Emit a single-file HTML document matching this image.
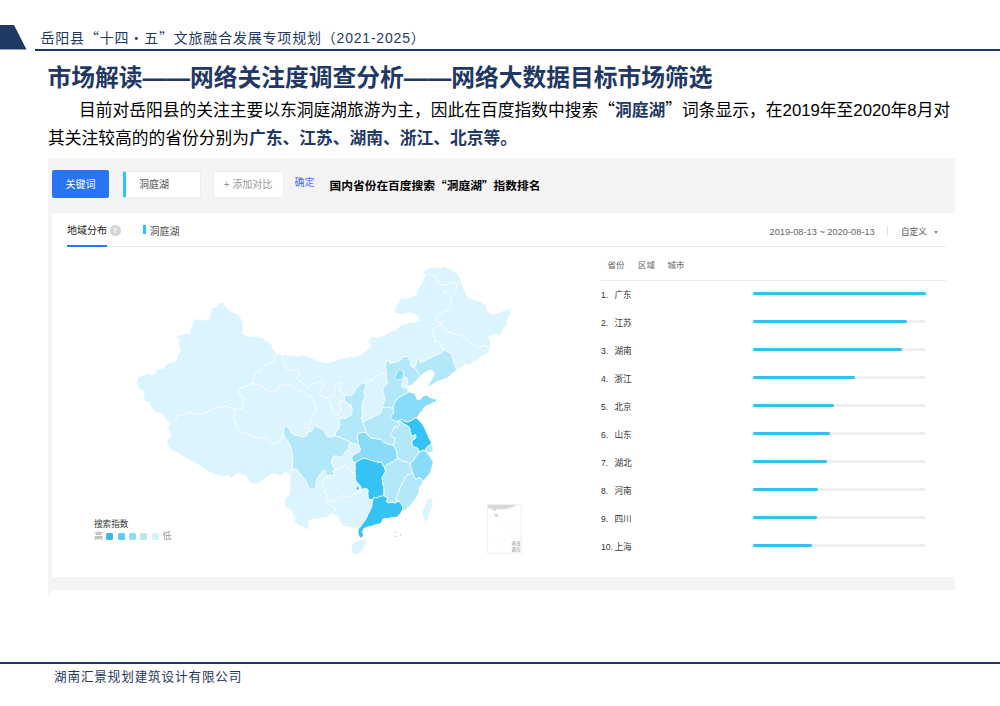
<!DOCTYPE html>
<html lang="zh-CN">
<head>
<meta charset="utf-8">
<title>市场解读——网络关注度调查分析</title>
<style>
*{margin:0;padding:0;box-sizing:border-box;}
html,body{width:1000px;height:706px;background:#fff;overflow:hidden;}
body{position:relative;font-family:"Liberation Sans","Noto Sans CJK SC",sans-serif;color:#000;}
.abs{position:absolute;white-space:nowrap;}
.cj{font-family:"Noto Sans CJK SC",sans-serif;}
/* slide chrome */
#corner{left:0;top:25px;width:27px;height:25px;}
#hdr{left:40.5px;top:26px;height:22px;line-height:22px;font-size:14px;letter-spacing:0.8px;color:#1f3864;}
#hline{left:35px;top:49px;width:965px;height:2px;background:#1f3864;}
#title{left:47.5px;top:61px;height:34px;line-height:34px;font-size:23.75px;font-weight:700;color:#1f3864;}
.body{font-size:16.75px;line-height:30px;height:30px;color:#000;}
.body b{color:#1f3864;font-weight:700;}
#l1{left:79px;top:93.5px;}
#l2{left:48px;top:124px;}
#fline{left:0;top:662px;width:1000px;height:2px;background:#1f3864;}
#foot{left:54px;top:668px;font-size:12.6px;line-height:18px;letter-spacing:0.85px;color:#1f3864;}
/* baidu index panel */
#panel{left:48px;top:157.5px;width:907px;height:432px;background:#f4f4f4;}
#pstub{left:48px;top:589px;width:3px;height:6px;background:#f4f4f4;}
#card{left:52px;top:213px;width:903px;height:363.5px;background:#fff;}
#kw{left:52px;top:170px;width:57px;height:28px;border-radius:2px;background:#2775f4;color:#fff;font-size:10px;line-height:29.6px;text-align:center;}
#inp{left:123px;top:170.5px;width:77.5px;height:27px;background:#fff;border:1px solid #ececec;border-left:3px solid #2ec3f2;border-radius:2px;font-size:10px;line-height:26.2px;padding-left:13px;color:#555;}
#add{left:212.5px;top:170.5px;width:71px;height:27px;background:#fff;border:1px solid #ececec;border-radius:2px;font-size:10px;line-height:26.2px;text-align:center;color:#999;}
#ok{left:294.5px;top:174px;font-size:10px;line-height:18px;color:#4e6ef2;}
#cap{left:329.5px;top:175px;font-size:11.72px;line-height:20px;font-weight:700;color:#000;}
#tab{left:67px;top:222px;font-size:10px;line-height:18px;color:#222;}
#q{left:109.5px;top:225px;width:11px;height:11px;border-radius:50%;background:#d4d4d4;color:#fff;font-size:8px;line-height:11px;text-align:center;font-weight:700;}
#tabu{left:67px;top:244.5px;width:39.5px;height:2px;background:#2775f4;}
#sep1{left:106.5px;top:246px;width:839.5px;height:1px;background:#ebebeb;}
#lgbar{left:143px;top:225px;width:3px;height:9px;background:#2ec3f2;}
#lgtxt{left:149.5px;top:222.6px;font-size:10px;line-height:18px;color:#555;}
#date{left:769.5px;top:223px;font-size:9.25px;line-height:18px;color:#666;}
#dv{left:886.5px;top:226px;width:1px;height:10px;background:#e2e2e2;}
#cust{left:901px;top:223px;font-size:8.6px;line-height:18px;color:#555;}
#caret{left:934px;top:231px;width:0;height:0;border-left:2.5px solid transparent;border-right:2.5px solid transparent;border-top:3px solid #888;}
.th{top:256.2px;font-size:8.5px;line-height:18px;color:#666;}
#sep2{left:601px;top:279.5px;width:345px;height:1px;background:#ebebeb;}
.rk{left:601px;font-size:8.6px;line-height:16px;color:#333;}
.rk span{position:absolute;left:13.5px;top:0;}
.bg{left:753px;width:173px;height:3px;background:#efefef;border-radius:1.5px;}
.fg{left:753px;height:3px;background:#2ec3f2;border-radius:1.5px;}
#lgt{left:94px;top:517px;font-size:8.6px;line-height:14px;color:#333;}
.lgs{top:533px;width:7px;height:7px;border-radius:1.5px;}
.lgl{top:528px;font-size:9px;line-height:16px;color:#999;}
#map{left:120px;top:250px;width:440px;height:320px;}
</style>
</head>
<body>
<svg id="corner" class="abs" viewBox="0 0 27 25"><polygon points="0,0 14,0 26.5,24.5 0,24.5" fill="#1f3864"/></svg>
<div id="hdr" class="abs">岳阳县<span class="cj">“</span>十四<span class="cj">·</span>五<span class="cj">”</span>文旅融合发展专项规划（2021-2025）</div>
<div id="hline" class="abs"></div>
<div id="title" class="abs">市场解读——网络关注度调查分析——网络大数据目标市场筛选</div>
<div id="l1" class="abs body">目前对岳阳县的关注主要以东洞庭湖旅游为主，因此在百度指数中搜索<span class="cj">“</span><b>洞庭湖</b><span class="cj">”</span>词条显示，在2019年至2020年8月对</div>
<div id="l2" class="abs body">其关注较高的的省份分别为<b>广东、江苏、湖南、浙江、北京等。</b></div>

<div id="panel" class="abs"></div>
<div id="pstub" class="abs"></div>
<div id="card" class="abs"></div>
<div id="kw" class="abs">关键词</div>
<div id="inp" class="abs">洞庭湖</div>
<div id="add" class="abs">+ 添加对比</div>
<div id="ok" class="abs">确定</div>
<div id="cap" class="abs">国内省份在百度搜索<span class="cj">“</span>洞庭湖<span class="cj">”</span>指数排名</div>
<div id="tab" class="abs">地域分布</div>
<div id="q" class="abs">?</div>
<div id="tabu" class="abs"></div>
<div id="sep1" class="abs"></div>
<div id="lgbar" class="abs"></div>
<div id="lgtxt" class="abs">洞庭湖</div>
<div id="date" class="abs">2019-08-13 ~ 2020-08-13</div>
<div id="dv" class="abs"></div>
<div id="cust" class="abs">自定义</div>
<div id="caret" class="abs"></div>
<div class="abs th" style="left:607.5px">省份</div>
<div class="abs th" style="left:638px">区域</div>
<div class="abs th" style="left:667.5px">城市</div>
<div id="sep2" class="abs"></div>
<div class="abs rk" style="top:286.5px">1.<span>广东</span></div>
<div class="abs bg" style="top:292.0px"></div><div class="abs fg" style="top:292.0px;width:173.0px"></div>
<div class="abs rk" style="top:314.5px">2.<span>江苏</span></div>
<div class="abs bg" style="top:320.0px"></div><div class="abs fg" style="top:320.0px;width:154.2px"></div>
<div class="abs rk" style="top:342.5px">3.<span>湖南</span></div>
<div class="abs bg" style="top:348.0px"></div><div class="abs fg" style="top:348.0px;width:149.0px"></div>
<div class="abs rk" style="top:370.5px">4.<span>浙江</span></div>
<div class="abs bg" style="top:376.0px"></div><div class="abs fg" style="top:376.0px;width:102.0px"></div>
<div class="abs rk" style="top:398.5px">5.<span>北京</span></div>
<div class="abs bg" style="top:404.0px"></div><div class="abs fg" style="top:404.0px;width:80.5px"></div>
<div class="abs rk" style="top:426.5px">6.<span>山东</span></div>
<div class="abs bg" style="top:432.0px"></div><div class="abs fg" style="top:432.0px;width:77.0px"></div>
<div class="abs rk" style="top:454.5px">7.<span>湖北</span></div>
<div class="abs bg" style="top:460.0px"></div><div class="abs fg" style="top:460.0px;width:74.4px"></div>
<div class="abs rk" style="top:482.5px">8.<span>河南</span></div>
<div class="abs bg" style="top:488.0px"></div><div class="abs fg" style="top:488.0px;width:64.5px"></div>
<div class="abs rk" style="top:510.5px">9.<span>四川</span></div>
<div class="abs bg" style="top:516.0px"></div><div class="abs fg" style="top:516.0px;width:63.7px"></div>
<div class="abs rk" style="top:538.5px">10.<span>上海</span></div>
<div class="abs bg" style="top:544.0px"></div><div class="abs fg" style="top:544.0px;width:58.8px"></div>
<div id="lgt" class="abs">搜索指数</div>
<div class="abs lgl" style="left:94px">高</div>
<div class="abs lgs" style="left:106px;background:#2fbdf0"></div>
<div class="abs lgs" style="left:117.5px;background:#5ccdf5"></div>
<div class="abs lgs" style="left:129px;background:#8fdcf9"></div>
<div class="abs lgs" style="left:140px;background:#b5e8fc"></div>
<div class="abs lgs" style="left:151.5px;background:#d6f2fe"></div>
<div class="abs lgl" style="left:162.5px">低</div>
<!--MAPSTART--><svg id="map" class="abs" width="440" height="320" viewBox="0 0 440 320">
<g stroke-linejoin="round" stroke-linecap="round">
<polygon points="17.0,133.0 17.5,130.9 18.0,128.9 19.0,127.0 21.0,126.4 22.9,125.2 25.0,124.9 27.0,124.0 29.0,123.4 30.0,125.0 31.6,124.4 33.3,124.6 35.0,124.4 35.3,122.6 36.3,121.0 37.0,119.4 38.7,119.0 40.3,119.0 42.0,119.4 43.6,118.1 45.4,117.1 46.6,115.3 48.2,114.1 50.0,113.0 51.8,112.4 53.7,111.9 55.3,110.8 57.0,110.0 57.2,108.3 58.1,106.8 58.0,105.0 58.7,103.4 60.3,102.5 61.0,101.0 60.2,99.1 59.4,97.1 59.0,95.0 58.7,93.0 58.8,91.0 59.0,89.0 57.9,87.6 56.4,86.6 58.2,85.8 60.3,85.6 62.2,85.2 64.0,84.4 66.0,84.0 67.7,84.2 69.4,84.0 71.0,84.6 70.3,82.7 70.4,80.6 70.9,78.6 72.1,76.8 72.6,74.8 73.3,72.8 74.3,71.0 75.0,69.0 77.0,69.5 79.0,70.0 80.8,70.0 82.5,70.6 84.2,70.6 86.0,70.6 87.9,69.6 90.0,69.0 90.3,67.0 90.5,65.0 91.1,63.0 91.0,61.0 91.7,60.1 92.0,59.0 93.6,58.2 95.5,58.1 97.0,57.0 97.4,55.5 98.3,54.3 99.0,53.0 100.5,53.2 102.1,52.7 103.6,53.0 104.3,54.8 105.0,56.6 106.5,57.4 107.4,58.9 108.6,60.1 110.0,61.0 111.3,61.7 112.5,62.6 114.0,63.0 115.7,63.5 117.3,64.5 119.0,65.0 119.7,66.6 120.5,68.2 121.4,69.8 121.9,71.5 123.0,73.0 122.6,74.8 123.0,76.5 122.9,78.2 123.0,80.0 122.3,81.3 121.0,82.0 122.4,83.6 124.0,85.0 126.0,85.7 127.9,86.5 130.0,86.6 132.0,87.0 134.0,86.6 136.0,86.8 138.0,87.0 139.6,87.8 141.5,87.9 143.0,89.0 144.7,90.2 146.5,91.2 148.0,92.6 149.7,93.5 151.0,95.0 152.0,96.2 152.1,97.8 153.0,99.0 154.3,100.6 155.2,102.5 156.0,104.4 158.0,104.5 160.0,105.1 162.0,105.0 163.9,104.8 165.7,105.4 167.5,105.6 169.6,105.8 171.7,106.2 173.9,106.3 176.0,106.2 177.8,106.4 179.6,105.8 181.4,105.8 183.2,105.6 185.0,105.6 186.5,106.7 188.2,107.6 190.0,108.0 192.1,108.6 194.1,109.5 196.0,110.6 197.7,110.8 199.3,111.3 200.9,112.0 202.5,112.5 204.1,113.0 205.9,113.1 207.5,113.8 209.0,112.7 210.8,112.5 212.5,112.0 214.3,111.1 216.3,110.4 218.3,109.9 220.0,108.8 221.9,108.6 223.8,108.1 225.6,107.9 227.5,107.5 229.4,107.5 231.2,106.8 233.1,107.5 235.0,107.0 237.1,106.4 239.1,105.6 241.0,104.4 242.8,103.6 244.3,102.2 246.0,101.2 247.3,99.9 248.4,98.5 250.0,97.5 250.9,96.3 251.5,95.0 250.1,93.3 249.4,91.2 249.9,89.6 250.9,88.3 252.0,87.0 254.0,87.0 256.0,87.5 258.0,88.0 259.9,87.0 261.9,86.2 264.0,86.0 265.3,84.7 266.8,83.7 268.4,82.9 270.0,82.0 271.9,80.9 274.1,81.0 276.0,80.0 277.6,78.8 278.8,77.3 280.4,76.1 282.0,75.0 284.0,74.4 286.0,73.9 287.9,73.2 290.0,73.0 292.1,73.0 294.1,72.8 296.0,72.0 298.0,71.5 300.0,71.0 299.3,69.3 298.3,67.8 298.0,66.0 296.5,65.3 295.2,64.1 294.0,63.0 291.9,62.7 290.0,62.0 287.9,62.2 286.1,63.2 284.0,63.4 282.4,64.0 280.6,63.4 279.0,64.0 277.5,63.3 275.8,63.0 274.4,62.0 275.3,60.0 275.7,57.8 277.0,56.0 277.8,54.4 279.0,53.0 279.7,51.3 280.4,49.7 281.0,48.0 282.7,48.1 284.4,48.5 286.0,49.0 287.9,48.0 290.1,47.9 292.0,47.0 293.7,46.0 295.5,45.2 297.0,44.0 297.5,42.0 298.1,39.9 299.0,38.0 300.2,36.4 301.4,34.7 302.3,32.9 303.0,31.0 304.0,29.6 304.8,28.1 305.4,26.6 306.0,25.0 304.3,24.0 303.0,22.6 304.7,21.4 306.3,20.1 308.0,19.0 309.9,18.3 311.9,18.1 314.0,18.1 316.0,18.0 318.0,17.5 320.0,17.7 322.1,17.7 324.0,17.0 325.8,17.6 327.4,18.6 329.1,19.2 331.0,19.4 332.4,20.9 334.4,21.7 336.0,23.0 337.2,24.4 338.2,25.9 339.2,27.3 340.0,29.0 341.0,30.9 341.4,33.0 341.9,35.1 343.0,37.0 343.5,38.9 344.5,40.5 345.1,42.3 346.0,44.0 346.4,45.5 347.7,46.5 348.0,48.0 350.0,48.8 351.9,49.7 354.0,50.0 355.7,50.7 357.4,51.2 359.3,51.5 361.0,52.0 362.5,52.8 363.5,54.2 365.0,55.0 365.9,56.7 366.3,58.6 366.9,60.4 368.0,62.0 369.4,62.8 370.7,63.7 372.0,64.6 373.8,64.6 375.5,64.0 377.2,63.1 379.0,63.0 380.6,61.9 382.4,61.2 384.4,61.1 386.0,60.0 387.7,59.9 389.3,59.0 391.0,59.0 390.4,61.0 389.9,62.9 390.0,65.0 388.9,66.2 388.1,67.7 387.0,69.0 386.6,71.0 386.7,73.1 386.0,75.0 385.4,76.7 383.6,77.8 382.9,79.4 382.0,81.0 381.3,82.3 380.3,83.5 380.0,85.0 378.2,84.8 376.5,84.2 374.8,84.0 373.0,84.0 371.5,85.2 369.8,86.2 368.0,87.0 368.8,88.9 369.6,90.9 370.0,93.0 369.9,95.0 370.2,97.0 370.0,99.0 369.4,100.4 369.0,101.8 368.0,103.0 365.9,103.3 364.0,104.5 362.0,105.0 360.7,106.4 359.3,107.6 358.0,109.0 356.3,109.4 355.0,110.6 353.3,110.9 352.0,112.0 351.0,113.5 350.0,115.0 348.3,114.6 346.7,114.3 345.0,114.0 343.6,115.7 341.7,116.7 340.0,118.0 338.3,119.4 336.2,120.3 334.8,121.8 332.8,122.4 331.2,123.8 330.2,125.2 328.8,126.3 327.5,127.5 325.6,127.9 323.7,128.7 321.9,129.5 320.0,130.0 318.3,130.8 316.6,131.6 315.0,132.5 313.6,133.1 312.7,134.5 311.2,135.0 309.8,135.7 308.5,136.5 309.0,134.7 310.0,133.0 310.7,131.5 311.9,130.3 312.5,128.8 313.3,127.1 314.2,125.4 315.0,123.8 314.4,121.9 313.3,120.9 312.0,120.2 310.0,120.0 308.4,120.0 307.0,120.8 306.0,121.4 305.0,121.9 303.4,123.1 302.0,124.5 301.0,125.4 300.0,126.2 298.7,127.5 297.4,128.6 296.2,130.0 295.2,131.2 294.1,132.3 293.0,133.5 292.0,134.4 291.0,135.3 289.6,135.0 288.3,135.5 287.6,136.7 287.3,138.0 287.2,139.6 287.4,141.1 288.0,142.5 289.8,142.6 291.5,143.2 293.2,143.8 295.0,143.8 295.1,145.7 296.2,147.4 296.2,149.4 298.2,149.7 300.0,150.6 301.2,149.1 302.2,147.4 303.8,146.2 304.9,145.7 306.2,145.6 307.7,146.1 308.7,147.3 310.0,148.0 312.0,148.7 314.1,149.3 316.2,149.4 315.9,150.8 315.0,151.9 313.3,152.3 311.6,153.0 310.0,153.8 308.5,154.9 306.5,155.1 305.0,156.2 303.4,157.7 302.7,159.7 301.2,161.2 299.7,162.7 298.8,164.6 297.5,166.2 296.2,168.0 297.5,169.4 299.0,170.8 300.1,172.6 301.9,173.8 302.4,175.4 303.7,176.7 304.3,178.4 305.0,180.0 305.6,181.6 306.4,183.1 307.1,184.6 307.5,186.2 308.5,187.6 309.0,189.2 310.0,190.6 310.9,192.2 311.0,194.0 311.7,195.5 312.5,197.0 312.6,198.8 312.5,200.5 311.5,201.6 310.0,202.0 308.0,202.5 306.0,202.5 307.5,204.0 308.9,205.7 310.0,207.5 310.7,208.8 311.7,210.0 312.5,211.2 312.7,213.0 311.7,214.5 312.0,216.2 311.3,217.8 310.7,219.5 310.6,221.2 310.0,222.7 309.0,223.9 308.0,225.0 307.3,226.5 305.8,227.3 305.0,228.8 304.1,229.8 303.0,230.6 302.5,232.5 301.7,234.0 300.5,235.0 299.4,236.2 298.8,237.9 298.7,239.5 298.8,241.2 298.1,243.3 297.4,245.2 296.2,247.0 294.9,248.2 294.0,249.8 293.0,251.2 291.9,252.4 291.3,254.0 290.0,255.0 289.0,256.5 287.4,257.4 286.3,258.8 285.0,260.0 283.8,260.4 282.5,260.0 281.3,261.0 280.7,262.4 280.0,263.8 278.6,264.8 277.5,266.2 275.7,267.0 273.8,267.0 271.8,266.9 270.0,267.5 268.2,268.1 266.2,268.0 264.3,268.1 262.5,268.8 261.9,270.6 261.2,272.5 259.7,273.3 258.0,273.8 256.6,274.1 255.1,274.2 253.8,275.0 252.1,275.6 250.5,276.2 248.8,276.2 247.1,276.8 245.5,277.6 243.8,278.0 243.0,280.0 241.6,281.7 242.5,282.8 242.9,284.2 243.0,285.6 242.3,286.8 240.4,287.4 239.5,286.2 239.0,284.8 238.6,283.4 238.4,281.9 238.4,280.4 239.2,279.0 239.5,277.5 238.0,277.8 236.5,277.8 234.9,277.5 233.3,277.2 231.8,277.3 230.3,276.9 228.9,276.6 226.9,276.7 225.0,275.9 223.3,275.1 221.9,274.0 220.6,272.6 220.0,270.8 219.5,268.8 218.7,267.0 217.1,266.0 215.5,265.0 214.1,264.7 213.0,263.8 211.4,264.1 209.7,264.4 208.2,265.1 207.2,266.4 205.7,267.3 204.0,267.6 202.4,267.3 200.8,267.6 199.2,268.3 197.6,268.9 195.7,268.6 193.8,268.3 192.0,269.0 190.6,270.2 189.3,270.6 188.0,270.8 188.2,272.7 188.3,274.7 188.7,276.6 187.9,278.1 188.0,279.7 186.1,279.1 184.7,278.0 183.6,276.6 181.9,276.6 180.4,277.2 179.6,275.5 178.5,274.0 177.3,273.1 175.9,272.4 174.7,271.5 175.0,270.0 175.1,268.4 175.9,267.0 174.6,266.2 173.6,265.1 172.8,263.8 172.3,262.0 171.3,260.5 170.8,258.7 169.0,258.4 167.3,257.8 165.7,256.8 165.4,255.1 164.5,253.6 165.1,251.8 165.0,250.0 166.4,248.6 167.3,246.9 168.6,245.4 170.0,244.0 170.1,242.0 170.6,240.0 171.0,238.0 170.4,236.0 170.5,234.0 170.0,232.0 170.0,230.0 170.4,228.2 170.4,226.5 170.0,224.8 170.0,223.0 169.1,223.7 168.0,224.0 166.8,222.3 165.0,221.2 164.3,222.6 163.4,223.8 162.5,225.0 160.6,225.4 158.8,225.0 157.0,224.4 155.4,223.7 153.8,223.0 152.1,223.7 150.5,224.6 148.8,225.0 147.1,226.2 145.7,227.9 143.8,228.8 142.6,230.0 141.5,231.1 140.0,231.9 139.0,232.5 138.0,233.0 136.2,233.4 134.5,233.4 132.8,233.2 131.0,233.0 129.8,231.8 129.1,230.3 128.0,229.0 127.0,227.5 126.0,226.0 124.3,225.0 122.6,224.4 120.8,223.6 119.0,223.0 117.2,223.3 115.7,224.4 114.0,225.0 113.1,226.4 111.7,227.4 111.0,229.0 110.2,227.1 110.0,225.0 108.0,225.0 106.0,225.4 104.1,226.2 102.0,226.0 100.1,225.2 98.1,224.7 96.0,224.4 94.0,224.0 92.5,223.0 90.9,222.1 89.1,221.9 87.6,220.8 86.0,220.0 84.3,218.7 82.7,217.3 80.9,216.0 79.0,215.0 77.3,213.7 75.4,212.9 73.8,211.7 71.9,210.9 70.0,210.0 68.6,208.9 66.9,208.2 65.3,207.4 64.0,206.0 62.3,205.5 60.7,204.5 59.0,203.9 57.7,202.5 56.0,202.0 54.5,201.2 53.1,200.4 51.6,199.6 50.0,199.0 49.5,197.3 48.7,195.7 48.0,194.0 47.2,192.4 47.6,190.6 47.0,189.0 49.1,188.7 51.0,188.0 51.0,186.0 51.0,184.0 50.4,182.7 49.8,181.3 49.0,180.0 48.6,178.0 49.0,176.0 49.9,174.8 50.1,173.2 51.0,172.0 49.2,171.7 47.6,170.9 46.0,170.0 45.4,168.4 44.3,167.1 43.9,165.4 43.0,164.0 41.4,163.1 39.5,163.0 37.7,162.6 36.0,162.0 34.7,160.7 33.5,159.2 32.0,158.0 31.5,156.4 30.6,155.0 29.9,153.4 29.0,152.0 27.3,151.6 25.9,150.8 24.4,149.9 23.0,149.0 24.2,147.6 25.0,146.0 24.5,144.4 24.4,142.7 24.0,141.0 22.1,140.4 20.5,139.3 19.0,138.0 18.1,136.4 17.8,134.6" fill="#dcf4fe"/>
<polygon points="163.0,184.4 164.2,185.9 165.0,187.5 166.3,189.2 168.0,190.6 168.3,192.2 169.5,193.4 170.0,195.0 170.5,196.9 171.2,198.8 171.7,200.6 171.8,202.5 172.3,204.4 172.5,206.2 172.8,207.9 172.8,209.6 172.5,211.2 172.8,212.9 172.1,214.6 172.5,216.3 172.5,218.0 172.7,219.2 173.8,220.0 175.0,219.3 176.2,218.8 177.4,219.8 178.1,221.1 178.8,222.5 180.3,223.8 181.4,225.4 182.5,227.0 184.0,228.3 185.0,230.0 186.0,231.6 186.9,233.2 187.5,235.0 188.3,236.5 188.9,238.1 190.0,239.4 191.5,239.3 193.0,238.8 194.6,238.1 196.2,237.5 196.2,235.8 196.3,234.2 196.2,232.5 196.8,230.6 197.5,228.8 198.2,227.4 198.8,226.0 200.0,225.0 200.7,223.6 202.0,222.7 202.5,221.2 203.3,220.3 204.4,220.0 205.0,221.3 205.6,222.5 206.4,224.4 207.5,226.2 208.9,225.9 210.0,225.0 211.3,225.1 212.5,225.6 213.7,224.8 215.0,224.4 213.8,222.9 213.0,221.2 213.9,220.3 215.0,219.4 214.0,217.9 213.0,216.2 212.5,214.4 211.2,213.0 211.9,210.9 212.0,208.8 213.1,207.7 213.8,206.2 215.4,205.8 217.0,206.2 218.7,206.5 220.0,207.5 221.6,207.0 223.0,206.2 224.0,204.5 224.4,202.5 225.7,201.5 227.0,200.6 227.9,198.8 228.8,197.0 228.7,195.4 229.5,194.0 230.0,192.5 229.0,191.2 227.5,190.6 225.9,189.7 224.3,189.1 222.5,188.8 220.8,187.5 218.8,187.0 216.8,186.5 215.0,185.6 213.4,186.4 211.8,186.8 210.0,187.0 208.1,186.3 206.2,185.6 205.8,183.7 205.0,182.0 204.0,180.6 202.6,179.7 201.2,178.8 199.4,178.0 197.5,177.5 197.1,176.1 196.2,175.0 195.0,176.3 193.8,177.5 192.9,178.7 192.4,180.2 191.2,181.2 189.3,181.6 187.5,182.5 187.1,184.5 186.2,186.2 184.3,186.5 182.5,187.5 181.3,186.6 179.9,186.0 178.8,185.0 177.6,185.6 176.2,185.6 174.3,184.9 172.5,183.8 171.3,182.1 170.0,180.6 169.5,179.1 168.3,177.8 168.0,176.2 166.7,176.3 165.6,175.6 164.7,177.2 163.8,178.8 163.4,180.6 163.3,182.5 163.0,184.4" fill="#b3e8fb"/>
<polygon points="215.0,185.6 215.3,184.1 215.7,182.7 216.2,181.2 217.7,180.2 218.8,178.8 218.8,177.1 219.3,175.5 220.0,174.0 219.6,172.4 218.8,171.0 219.2,169.4 220.0,168.0 221.7,167.9 223.4,168.1 225.0,168.8 226.3,167.9 227.5,167.0 229.3,165.9 231.2,165.0 231.9,163.4 232.0,161.7 231.9,160.0 232.1,158.3 231.3,156.7 231.2,155.0 229.2,154.2 227.3,153.1 225.6,151.7 223.8,150.6 224.5,149.1 224.4,147.5 224.5,146.2 225.0,145.0 227.0,145.2 228.8,146.2 230.5,145.3 232.5,145.0 233.7,143.5 234.0,141.6 235.0,140.0 236.4,138.7 237.8,137.3 238.8,135.6 239.9,134.6 241.1,133.7 242.5,133.0 244.5,132.9 246.2,132.0 245.8,134.1 245.6,136.2 245.2,138.4 244.2,140.4 243.8,142.5 244.5,144.3 245.0,146.2 244.5,148.0 244.1,149.7 243.0,151.2 242.4,153.1 242.0,155.0 242.0,157.0 242.0,159.0 241.9,161.0 242.5,163.0 242.5,165.1 241.9,167.0 241.2,169.0 242.1,170.2 243.0,171.5 243.0,173.3 243.8,175.0 244.3,177.1 245.6,178.8 246.0,180.6 246.2,182.5 245.0,182.7 243.8,182.5 242.5,182.6 241.2,182.5 240.0,182.8 238.8,183.0 237.5,184.4 237.0,186.2 237.6,187.6 237.4,189.2 238.0,190.6 238.0,192.3 238.2,194.0 238.8,195.6 237.0,194.5 235.0,193.8 233.4,193.2 231.6,193.1 230.0,192.5 229.0,191.2 227.5,190.6 225.9,189.7 224.3,189.1 222.5,188.8 220.8,187.5 218.8,187.0 216.8,186.5 215.0,185.6" fill="#b3e8fb"/>
<polygon points="238.8,195.6 238.2,194.0 238.0,192.3 238.0,190.6 237.4,189.2 237.6,187.6 237.0,186.2 237.5,184.4 238.8,183.0 240.0,182.8 241.2,182.5 242.5,182.6 243.8,182.5 245.0,182.7 246.2,182.5 247.3,183.6 247.5,185.0 248.7,186.0 249.9,187.1 251.2,188.0 252.9,188.6 254.6,188.1 256.2,188.8 257.9,189.1 259.6,189.1 261.2,189.4 262.5,191.0 263.8,192.5 265.7,192.8 267.5,193.8 269.4,194.2 271.2,195.0 273.0,194.4 273.8,196.2 274.6,197.5 275.1,199.0 276.2,200.0 276.8,201.6 276.8,203.3 277.0,205.0 277.2,206.9 278.0,208.8 276.3,209.0 275.0,210.0 273.6,211.2 272.0,212.2 270.1,212.5 268.8,213.8 267.0,214.5 265.9,215.9 264.4,216.9 263.2,216.2 262.5,215.0 262.2,213.4 261.2,212.0 259.6,212.3 258.0,212.5 256.7,211.7 255.2,211.6 253.8,211.2 252.2,210.4 250.3,210.3 248.8,209.4 247.2,208.7 245.3,208.7 243.8,208.0 242.1,208.9 240.3,209.5 238.8,210.6 237.3,211.2 236.4,212.4 235.0,213.0 233.3,211.7 232.0,210.0 231.9,208.5 232.0,207.0 233.2,205.7 234.4,204.4 235.8,203.7 237.2,202.8 238.8,202.5 239.5,200.8 240.6,199.4 239.9,197.4 238.8,195.6" fill="#88dcf9"/>
<polygon points="235.0,213.0 236.4,212.4 237.3,211.2 238.8,210.6 240.3,209.5 242.1,208.9 243.8,208.0 245.3,208.7 247.2,208.7 248.8,209.4 250.3,210.3 252.2,210.4 253.8,211.2 255.2,211.6 256.7,211.7 258.0,212.5 259.6,212.3 261.2,212.0 262.2,213.4 262.5,215.0 263.2,216.2 264.4,216.9 264.5,218.5 265.3,220.0 265.6,221.3 265.0,222.5 264.2,223.7 263.5,225.0 262.5,226.7 261.9,228.5 262.6,230.2 262.5,232.0 262.7,234.1 263.5,236.0 264.0,237.6 263.7,239.3 264.0,241.0 263.9,242.5 263.7,244.1 263.8,245.6 261.6,246.1 259.4,246.2 258.5,247.2 257.5,248.0 255.6,247.7 253.8,247.5 253.2,248.8 252.5,250.0 250.6,249.6 248.8,249.4 248.5,247.9 248.2,246.5 248.0,245.0 247.7,243.0 248.3,241.0 247.7,239.7 247.0,238.6 245.5,238.5 244.0,238.3 242.9,239.4 241.5,240.2 241.3,238.6 240.9,237.1 240.2,235.6 238.7,234.1 237.3,232.6 236.0,230.9 235.2,229.0 235.5,227.2 235.8,225.5 235.1,224.1 235.0,222.5 234.9,221.0 235.3,219.5 235.6,218.0 235.0,216.4 235.1,214.7 235.0,213.0" fill="#35c3f5"/>
<polygon points="252.5,250.0 253.2,248.8 253.8,247.5 255.6,247.7 257.5,248.0 258.5,247.2 259.4,246.2 261.6,246.1 263.8,245.6 265.5,246.9 267.5,247.5 267.2,249.5 266.2,251.2 267.4,252.3 268.8,253.0 270.6,252.4 272.5,252.5 273.7,252.8 275.0,253.0 276.6,252.2 278.0,251.2 279.7,252.0 281.2,253.0 281.6,254.7 282.5,256.2 282.5,258.1 282.5,260.0 281.3,261.0 280.7,262.4 280.0,263.8 278.6,264.8 277.5,266.2 275.7,267.0 273.8,267.0 271.8,266.9 270.0,267.5 268.2,268.1 266.2,268.0 264.3,268.1 262.5,268.8 261.9,270.6 261.2,272.5 259.7,273.3 258.0,273.8 256.6,274.1 255.1,274.2 253.8,275.0 252.1,275.6 250.5,276.2 248.8,276.2 247.1,276.8 245.5,277.6 243.8,278.0 243.0,280.0 241.6,281.7 242.5,282.8 242.9,284.2 243.0,285.6 242.3,286.8 240.4,287.4 239.5,286.2 239.0,284.8 238.6,283.4 238.4,281.9 238.4,280.4 239.2,279.0 239.5,277.5 240.8,276.6 241.3,275.0 242.5,274.0 243.6,272.1 245.0,270.5 245.8,269.0 246.5,267.4 247.5,266.0 247.8,264.5 248.6,263.2 249.5,262.0 250.1,259.9 251.2,258.0 252.0,255.9 252.0,253.8 252.4,251.9 252.5,250.0" fill="#35c3f5"/>
<polygon points="264.4,216.9 265.9,215.9 267.0,214.5 268.8,213.8 270.1,212.5 272.0,212.2 273.6,211.2 275.0,210.0 276.3,209.0 278.0,208.8 280.0,209.4 281.4,210.2 282.5,211.2 284.5,211.2 286.2,212.0 288.3,212.5 290.0,213.8 290.2,215.8 291.2,217.5 291.6,219.2 291.9,220.9 292.5,222.5 290.6,223.4 288.8,224.4 287.3,225.0 286.5,226.4 285.0,227.0 284.2,228.3 284.1,229.8 283.8,231.2 283.0,232.6 281.9,233.6 281.2,235.0 280.8,236.7 279.6,238.2 279.4,240.0 278.7,241.6 278.3,243.4 277.5,245.0 276.9,246.6 276.7,248.3 276.2,250.0 278.0,251.2 276.6,252.2 275.0,253.0 273.7,252.8 272.5,252.5 270.6,252.4 268.8,253.0 267.4,252.3 266.2,251.2 267.2,249.5 267.5,247.5 265.5,246.9 263.8,245.6 263.7,244.1 263.9,242.5 264.0,241.0 263.7,239.3 264.0,237.6 263.5,236.0 262.7,234.1 262.5,232.0 262.6,230.2 261.9,228.5 262.5,226.7 263.5,225.0 264.2,223.7 265.0,222.5 265.6,221.3 265.3,220.0 264.5,218.5 264.4,216.9" fill="#b3e8fb"/>
<polygon points="292.5,222.5 290.6,223.4 288.8,224.4 287.3,225.0 286.5,226.4 285.0,227.0 284.2,228.3 284.1,229.8 283.8,231.2 283.0,232.6 281.9,233.6 281.2,235.0 280.8,236.7 279.6,238.2 279.4,240.0 278.7,241.6 278.3,243.4 277.5,245.0 276.9,246.6 276.7,248.3 276.2,250.0 278.0,251.2 279.7,252.0 281.2,253.0 281.6,254.7 282.5,256.2 282.5,258.1 282.5,260.0 283.8,260.4 285.0,260.0 286.3,258.8 287.4,257.4 289.0,256.5 290.0,255.0 291.3,254.0 291.9,252.4 293.0,251.2 294.0,249.8 294.9,248.2 296.2,247.0 297.4,245.2 298.1,243.3 298.8,241.2 298.7,239.5 298.8,237.9 299.4,236.2 300.5,235.0 301.7,234.0 302.5,232.5 303.0,230.6 301.4,229.1 300.0,227.5 298.3,227.9 296.8,229.0 295.0,229.4 294.8,227.5 293.5,226.0 293.4,224.1 292.5,222.5" fill="#b3e8fb"/>
<polygon points="290.0,213.8 290.2,215.8 291.2,217.5 291.6,219.2 291.9,220.9 292.5,222.5 293.4,224.1 293.5,226.0 294.8,227.5 295.0,229.4 296.8,229.0 298.3,227.9 300.0,227.5 301.4,229.1 303.0,230.6 304.1,229.8 305.0,228.8 305.8,227.3 307.3,226.5 308.0,225.0 309.0,223.9 310.0,222.7 310.6,221.2 310.7,219.5 311.3,217.8 312.0,216.2 311.7,214.5 312.7,213.0 312.5,211.2 311.7,210.0 310.7,208.8 310.0,207.5 308.9,205.7 307.5,204.0 306.0,202.5 308.0,202.5 306.3,201.3 304.4,200.6 303.2,200.2 302.0,200.5 300.6,201.3 299.0,201.5 298.3,203.3 297.5,205.0 296.2,206.2 295.0,207.5 294.1,209.4 293.0,211.2 291.3,212.3 290.0,213.8" fill="#88dcf9"/>
<polygon points="304.4,200.6 305.5,199.5 306.1,197.9 307.5,197.0 308.4,195.7 309.7,194.9 311.0,194.0 311.7,195.5 312.5,197.0 312.6,198.8 312.5,200.5 311.5,201.6 310.0,202.0 308.0,202.5 306.3,201.3 304.4,200.6" fill="#b3e8fb"/>
<polygon points="279.5,170.5 280.6,169.6 282.0,169.4 283.1,170.1 283.8,171.2 285.6,171.5 287.5,172.0 289.4,171.3 291.2,170.6 292.6,169.8 293.8,168.8 294.9,168.0 296.2,168.0 297.5,169.4 299.0,170.8 300.1,172.6 301.9,173.8 302.4,175.4 303.7,176.7 304.3,178.4 305.0,180.0 305.6,181.6 306.4,183.1 307.1,184.6 307.5,186.2 308.5,187.6 309.0,189.2 310.0,190.6 310.9,192.2 311.0,194.0 309.7,194.9 308.4,195.7 307.5,197.0 306.1,197.9 305.5,199.5 304.4,200.6 303.2,200.2 302.0,200.5 300.6,201.3 299.0,201.5 298.5,199.6 297.5,198.0 295.7,197.4 293.8,197.0 292.5,195.6 292.0,193.8 291.9,191.8 292.5,190.0 293.8,189.4 295.0,188.8 295.7,187.6 296.2,186.2 295.6,185.4 295.0,184.4 294.2,185.2 293.8,186.2 292.3,186.0 291.2,185.0 290.8,183.1 290.0,181.2 289.9,179.3 289.4,177.5 287.9,176.2 286.2,175.0 284.3,174.2 282.5,173.0 281.2,171.5 279.5,170.5" fill="#35c3f5"/>
<polygon points="288.0,142.5 289.8,142.6 291.5,143.2 293.2,143.8 295.0,143.8 295.1,145.7 296.2,147.4 296.2,149.4 298.2,149.7 300.0,150.6 301.2,149.1 302.2,147.4 303.8,146.2 304.9,145.7 306.2,145.6 307.7,146.1 308.7,147.3 310.0,148.0 312.0,148.7 314.1,149.3 316.2,149.4 315.9,150.8 315.0,151.9 313.3,152.3 311.6,153.0 310.0,153.8 308.5,154.9 306.5,155.1 305.0,156.2 303.4,157.7 302.7,159.7 301.2,161.2 299.7,162.7 298.8,164.6 297.5,166.2 296.2,168.0 294.9,168.0 293.8,168.8 292.6,169.8 291.2,170.6 289.4,171.3 287.5,172.0 285.6,171.5 283.8,171.2 283.1,170.1 282.0,169.4 280.6,169.6 279.5,170.5 277.5,171.2 275.6,171.0 273.8,170.6 272.0,169.5 270.6,168.0 270.9,166.8 270.6,165.6 271.8,164.7 272.9,163.7 273.8,162.5 273.3,161.0 273.4,159.5 273.0,158.0 273.4,156.8 273.0,155.6 274.2,153.9 275.0,152.0 276.1,150.3 277.5,148.8 279.1,147.4 281.0,146.4 282.5,145.0 284.4,144.4 286.3,143.6 288.0,142.5" fill="#88dcf9"/>
<polygon points="243.0,171.5 244.5,170.9 246.2,170.6 247.5,169.6 249.1,168.8 251.0,168.5 252.5,167.5 254.1,166.6 255.7,165.6 257.5,165.0 258.9,164.4 260.2,163.7 261.2,162.5 261.3,160.7 262.2,159.2 262.5,157.5 264.4,157.4 266.2,157.0 268.0,157.1 269.6,157.6 271.2,158.0 273.0,158.0 273.4,159.5 273.3,161.0 273.8,162.5 272.9,163.7 271.8,164.7 270.6,165.6 270.9,166.8 270.6,168.0 272.0,169.5 273.8,170.6 275.6,171.0 277.5,171.2 279.5,170.5 278.0,172.0 278.5,173.3 279.4,174.4 278.9,175.8 278.0,177.0 276.4,177.1 275.0,176.2 274.0,177.7 273.8,179.4 272.6,181.0 271.2,182.5 270.6,183.7 270.6,185.0 271.6,186.2 272.5,187.5 273.7,188.1 275.0,188.0 275.0,189.6 275.0,191.2 274.3,193.0 273.0,194.4 271.2,195.0 269.4,194.2 267.5,193.8 265.7,192.8 263.8,192.5 262.5,191.0 261.2,189.4 259.6,189.1 257.9,189.1 256.2,188.8 254.6,188.1 252.9,188.6 251.2,188.0 249.9,187.1 248.7,186.0 247.5,185.0 247.3,183.6 246.2,182.5 246.0,180.6 245.6,178.8 244.3,177.1 243.8,175.0 243.0,173.3 243.0,171.5" fill="#b3e8fb"/>
<polygon points="273.0,194.4 274.3,193.0 275.0,191.2 275.0,189.6 275.0,188.0 273.7,188.1 272.5,187.5 271.6,186.2 270.6,185.0 270.6,183.7 271.2,182.5 272.6,181.0 273.8,179.4 274.0,177.7 275.0,176.2 276.4,177.1 278.0,177.0 278.9,175.8 279.4,174.4 278.5,173.3 278.0,172.0 279.5,170.5 281.2,171.5 282.5,173.0 284.3,174.2 286.2,175.0 287.9,176.2 289.4,177.5 289.9,179.3 290.0,181.2 290.8,183.1 291.2,185.0 292.3,186.0 293.8,186.2 294.2,185.2 295.0,184.4 295.6,185.4 296.2,186.2 295.7,187.6 295.0,188.8 293.8,189.4 292.5,190.0 291.9,191.8 292.0,193.8 292.5,195.6 293.8,197.0 295.7,197.4 297.5,198.0 298.5,199.6 299.0,201.5 298.3,203.3 297.5,205.0 296.2,206.2 295.0,207.5 294.1,209.4 293.0,211.2 291.3,212.3 290.0,213.8 288.3,212.5 286.2,212.0 284.5,211.2 282.5,211.2 281.4,210.2 280.0,209.4 278.0,208.8 277.2,206.9 277.0,205.0 276.8,203.3 276.8,201.6 276.2,200.0 275.1,199.0 274.6,197.5 273.8,196.2 273.0,194.4" fill="#b3e8fb"/>
<polygon points="294.4,117.5 292.9,116.7 291.2,116.2 290.5,114.2 290.7,112.0 290.0,110.0 288.8,108.9 288.0,107.5 286.9,106.2 285.0,106.7 283.0,106.9 281.8,108.0 281.2,109.5 280.0,110.6 278.4,111.3 276.7,111.7 275.0,111.9 273.4,112.8 271.5,112.8 270.0,113.8 269.8,111.9 269.4,110.0 268.2,110.5 266.9,110.6 266.4,112.5 265.2,114.2 265.0,116.2 265.4,117.8 266.1,119.4 266.2,121.0 265.6,122.8 267.0,124.4 266.5,125.8 266.4,127.3 266.2,128.8 266.5,130.8 267.5,132.5 267.0,133.9 265.9,135.0 265.0,136.2 263.9,137.3 263.1,138.6 262.5,140.0 262.6,141.8 263.7,143.2 263.8,145.0 264.6,146.8 265.0,148.8 264.7,150.5 263.9,152.2 263.0,153.8 262.3,155.6 262.5,157.5 264.4,157.4 266.2,157.0 268.0,157.1 269.6,157.6 271.2,158.0 273.0,158.0 273.4,156.8 273.0,155.6 274.2,153.9 275.0,152.0 276.1,150.3 277.5,148.8 279.1,147.4 281.0,146.4 282.5,145.0 284.4,144.4 286.3,143.6 288.0,142.5 287.4,141.1 287.2,139.6 287.3,138.0 287.6,136.7 288.3,135.5 289.6,135.0 291.0,135.3 292.0,134.4 293.0,133.5 294.1,132.3 295.2,131.2 296.2,130.0 297.4,128.6 298.7,127.5 300.0,126.2 299.4,124.2 298.0,122.5 297.0,120.7 295.7,119.1 294.4,117.5" fill="#b3e8fb"/>
<polygon points="323.8,99.4 322.8,101.4 321.2,103.0 319.6,103.8 318.0,104.6 316.2,105.0 314.7,105.7 313.1,106.4 311.7,107.5 310.0,108.0 308.4,108.7 306.9,109.6 305.5,110.7 303.8,111.2 302.0,111.8 300.6,113.0 299.8,111.4 299.1,109.8 298.8,108.0 298.1,109.2 296.9,110.0 296.6,111.7 296.1,113.3 296.2,115.0 295.1,116.1 294.4,117.5 295.7,119.1 297.0,120.7 298.0,122.5 299.4,124.2 300.0,126.2 301.0,125.4 302.0,124.5 303.4,123.1 305.0,121.9 306.0,121.4 307.0,120.8 308.4,120.0 310.0,120.0 312.0,120.2 313.3,120.9 314.4,121.9 315.0,123.8 314.2,125.4 313.3,127.1 312.5,128.8 311.9,130.3 310.7,131.5 310.0,133.0 309.0,134.7 308.5,136.5 309.8,135.7 311.2,135.0 312.7,134.5 313.6,133.1 315.0,132.5 316.6,131.6 318.3,130.8 320.0,130.0 321.9,129.5 323.7,128.7 325.6,127.9 327.5,127.5 328.8,126.3 330.2,125.2 331.2,123.8 332.8,122.4 334.8,121.8 336.2,120.3 336.1,118.2 335.6,116.2 334.8,114.7 334.0,113.1 333.8,111.2 333.2,109.4 332.5,107.5 331.8,106.1 331.5,104.6 330.8,103.2 329.0,102.5 327.2,101.5 325.4,100.5 323.8,99.4" fill="#b3e8fb"/>
<polygon points="233.0,294.0 236.0,291.5 240.0,290.5 244.0,290.0 246.0,291.5 245.5,295.0 243.0,298.5 240.5,302.0 237.0,304.5 234.0,304.0 231.8,301.0 231.5,297.0" fill="#dcf4fe"/>
<polygon points="302.5,261.2 305.0,255.0 308.0,249.4 311.2,248.0 312.6,250.0 312.0,255.0 310.0,261.2 308.0,267.5 306.2,273.0 305.0,270.0 303.0,266.2" fill="#dcf4fe"/>
<g fill="none" stroke="#fff" stroke-width="1">
<polyline points="156.0,104.4 155.0,106.1 154.4,108.0 154.0,109.5 154.0,111.0 152.4,112.0 150.7,112.7 149.0,113.5 147.3,114.0 145.6,114.4 144.2,115.9 142.9,117.5 141.2,118.8 140.0,120.2 139.4,122.0 138.0,122.6 136.4,122.2 135.0,123.0 134.3,124.9 134.8,127.1 134.0,129.0 133.4,130.7 132.4,132.2 132.0,134.0"/>
<polyline points="132.0,134.0 129.9,134.3 128.0,135.4 126.0,136.0 124.3,136.9 122.6,137.7 120.6,137.9 119.0,139.0 118.7,140.1 118.0,141.0 118.6,142.7 119.6,144.2 120.0,146.0 121.5,146.3 123.0,146.5 123.7,148.0 125.0,149.0 123.7,150.7 122.0,152.0 122.4,153.5 123.3,154.7 124.0,156.0 122.7,157.3 122.0,159.0 120.2,159.0 118.5,159.5 116.7,159.1 115.0,159.6"/>
<polyline points="115.0,159.6 114.0,158.8 113.0,158.0 111.2,157.7 109.5,157.1 108.0,156.0 106.0,156.3 104.0,156.5 102.0,156.9 100.0,157.0 98.1,157.7 96.0,157.8 94.0,158.0 92.4,159.1 90.5,159.7 89.0,161.0 87.4,162.2 85.4,162.3 83.6,163.0 82.0,164.0 80.3,164.6 78.4,164.1 76.7,164.6 75.0,165.0 73.5,163.7 71.6,163.2 70.0,162.0 68.6,162.9 67.0,163.6 65.3,163.8 64.0,165.0 62.0,164.9 60.0,165.1 58.0,165.0 57.1,166.7 56.2,168.4 55.0,170.0 53.8,171.0 52.5,171.7 51.0,172.0"/>
<polyline points="115.0,159.6 114.4,161.7 114.5,163.9 114.0,166.0 113.9,168.1 114.9,170.0 115.0,172.0 115.9,173.9 116.3,176.0 117.0,178.0 118.5,179.1 119.7,180.6 121.0,182.0 122.6,182.9 124.4,183.3 126.2,183.8 128.0,184.0 130.0,184.9 131.9,185.8 133.9,186.6 136.0,187.0 138.0,187.5 140.0,188.0 141.5,188.0 142.9,187.3 144.4,187.5 145.9,188.3 147.5,188.8 148.6,190.1 149.4,191.7 150.6,193.0 152.0,193.6 153.6,193.7 155.0,194.4 156.3,193.3 158.0,193.0 159.3,192.3 159.9,190.8 161.2,190.0 162.1,188.7 163.0,187.5 162.9,185.9 163.0,184.4"/>
<polyline points="163.0,184.4 164.2,185.9 165.0,187.5 166.3,189.2 168.0,190.6 168.3,192.2 169.5,193.4 170.0,195.0 170.5,196.9 171.2,198.8 171.7,200.6 171.8,202.5 172.3,204.4 172.5,206.2 172.8,207.9 172.8,209.6 172.5,211.2 172.8,212.9 172.1,214.6 172.5,216.3 172.5,218.0"/>
<polyline points="172.5,218.0 172.1,219.1 171.2,220.0 170.3,221.4 170.0,223.0"/>
<polyline points="172.5,218.0 172.7,219.2 173.8,220.0 175.0,219.3 176.2,218.8 177.4,219.8 178.1,221.1 178.8,222.5 180.3,223.8 181.4,225.4 182.5,227.0 184.0,228.3 185.0,230.0 186.0,231.6 186.9,233.2 187.5,235.0 188.3,236.5 188.9,238.1 190.0,239.4 191.5,239.3 193.0,238.8 194.6,238.1 196.2,237.5 196.2,235.8 196.3,234.2 196.2,232.5 196.8,230.6 197.5,228.8 198.2,227.4 198.8,226.0 200.0,225.0 200.7,223.6 202.0,222.7 202.5,221.2 203.3,220.3 204.4,220.0 205.0,221.3 205.6,222.5 206.4,224.4 207.5,226.2"/>
<polyline points="207.5,226.2 208.9,225.9 210.0,225.0 211.3,225.1 212.5,225.6 213.7,224.8 215.0,224.4 213.8,222.9 213.0,221.2 213.9,220.3 215.0,219.4"/>
<polyline points="215.0,219.4 214.0,217.9 213.0,216.2 212.5,214.4 211.2,213.0 211.9,210.9 212.0,208.8 213.1,207.7 213.8,206.2 215.4,205.8 217.0,206.2 218.7,206.5 220.0,207.5 221.6,207.0 223.0,206.2 224.0,204.5 224.4,202.5 225.7,201.5 227.0,200.6 227.9,198.8 228.8,197.0 228.7,195.4 229.5,194.0 230.0,192.5"/>
<polyline points="230.0,192.5 229.0,191.2 227.5,190.6 225.9,189.7 224.3,189.1 222.5,188.8 220.8,187.5 218.8,187.0 216.8,186.5 215.0,185.6"/>
<polyline points="215.0,185.6 213.4,186.4 211.8,186.8 210.0,187.0 208.1,186.3 206.2,185.6 205.8,183.7 205.0,182.0 204.0,180.6 202.6,179.7 201.2,178.8 199.4,178.0 197.5,177.5 197.1,176.1 196.2,175.0 195.0,176.3 193.8,177.5 192.9,178.7 192.4,180.2 191.2,181.2 189.3,181.6 187.5,182.5"/>
<polyline points="187.5,182.5 187.1,184.5 186.2,186.2 184.3,186.5 182.5,187.5 181.3,186.6 179.9,186.0 178.8,185.0 177.6,185.6 176.2,185.6 174.3,184.9 172.5,183.8 171.3,182.1 170.0,180.6 169.5,179.1 168.3,177.8 168.0,176.2 166.7,176.3 165.6,175.6 164.7,177.2 163.8,178.8 163.4,180.6 163.3,182.5 163.0,184.4"/>
<polyline points="132.0,134.0 133.5,133.6 135.0,133.8 136.8,134.8 138.8,135.6 140.6,135.8 142.1,136.7 143.8,137.5 144.4,138.7 145.0,140.0 146.6,140.6 148.3,140.5 150.0,140.6 151.6,141.4 153.3,141.5 155.0,142.0 156.4,140.8 158.0,140.0 158.2,138.3 159.3,136.8 159.4,135.0 160.4,134.5 161.2,133.8 163.0,134.2 164.7,134.6 166.2,135.6 167.9,135.4 169.6,135.4 171.2,135.0 172.5,135.9 173.9,136.8 175.0,138.0 176.4,139.4 178.0,140.6 179.4,141.4 181.1,141.3 182.5,142.0 184.0,142.4 185.1,143.5 186.2,144.4 188.2,145.3 190.0,146.2 191.1,147.6 192.7,148.6 193.8,150.0 194.1,152.0 195.0,153.8 195.5,155.3 196.3,156.6 197.0,158.0 196.6,159.6 195.3,160.8 195.0,162.5 194.3,163.8 193.1,164.8 192.5,166.2 191.8,168.2 190.6,170.0 191.2,171.4 191.2,173.0 189.9,173.8 188.8,175.0 187.2,174.8 186.0,173.8 184.4,173.8 184.1,175.0 183.8,176.2 185.0,178.0 186.9,177.7 188.8,178.0 189.6,179.2 190.0,180.6 188.8,181.6 187.5,182.5"/>
<polyline points="162.0,105.0 162.2,106.7 162.3,108.4 163.0,110.0 164.0,111.5 164.4,113.3 165.0,115.0 166.0,116.4 166.1,118.2 167.5,119.4 168.0,121.0 169.4,120.3 170.9,119.9 172.5,120.0 174.3,119.7 176.2,120.0 178.0,119.4 178.7,121.1 180.0,122.5 179.5,124.0 179.4,125.6 177.9,126.0 176.7,126.9 175.6,128.0 177.3,128.9 178.8,130.0 180.2,130.8 181.0,132.3 182.5,133.0 183.6,134.5 185.0,135.6 186.6,135.8 187.9,137.0 189.4,137.5 189.6,135.9 190.0,134.4 191.9,134.0 193.8,133.8 195.6,133.0 197.5,132.5 199.1,131.8 200.7,131.2 202.5,131.2 203.6,132.4 204.4,133.8 203.8,135.7 203.0,137.5 201.2,138.8 200.0,140.6 200.0,142.2 199.4,143.8 200.7,145.3 202.5,146.2 204.2,146.9 205.6,148.0"/>
<polyline points="205.6,148.0 207.0,147.5 208.6,147.6 210.0,147.0 212.0,146.3 213.8,145.0 213.9,143.3 213.8,141.6 214.4,140.0 215.0,138.1 215.5,136.2 216.2,134.4 218.1,133.5 219.4,132.0 220.5,132.7 221.2,133.8 221.0,135.2 220.1,136.5 220.0,138.0 219.8,139.5 218.8,140.6 220.7,141.5 222.5,142.5 223.6,143.9 225.0,145.0"/>
<polyline points="225.0,145.0 224.5,146.2 224.4,147.5 224.5,149.1 223.8,150.6"/>
<polyline points="225.0,145.0 227.0,145.2 228.8,146.2 230.5,145.3 232.5,145.0 233.7,143.5 234.0,141.6 235.0,140.0 236.4,138.7 237.8,137.3 238.8,135.6 239.9,134.6 241.1,133.7 242.5,133.0 244.5,132.9 246.2,132.0"/>
<polyline points="246.2,132.0 245.8,134.1 245.6,136.2 245.2,138.4 244.2,140.4 243.8,142.5 244.5,144.3 245.0,146.2 244.5,148.0 244.1,149.7 243.0,151.2 242.4,153.1 242.0,155.0 242.0,157.0 242.0,159.0 241.9,161.0 242.5,163.0 242.5,165.1 241.9,167.0 241.2,169.0 242.1,170.2 243.0,171.5"/>
<polyline points="243.0,171.5 243.0,173.3 243.8,175.0 244.3,177.1 245.6,178.8 246.0,180.6 246.2,182.5"/>
<polyline points="246.2,182.5 245.0,182.7 243.8,182.5 242.5,182.6 241.2,182.5 240.0,182.8 238.8,183.0 237.5,184.4 237.0,186.2 237.6,187.6 237.4,189.2 238.0,190.6 238.0,192.3 238.2,194.0 238.8,195.6"/>
<polyline points="238.8,195.6 237.0,194.5 235.0,193.8 233.4,193.2 231.6,193.1 230.0,192.5"/>
<polyline points="215.0,185.6 215.3,184.1 215.7,182.7 216.2,181.2 217.7,180.2 218.8,178.8 218.8,177.1 219.3,175.5 220.0,174.0 219.6,172.4 218.8,171.0 219.2,169.4 220.0,168.0 221.7,167.9 223.4,168.1 225.0,168.8 226.3,167.9 227.5,167.0 229.3,165.9 231.2,165.0 231.9,163.4 232.0,161.7 231.9,160.0 232.1,158.3 231.3,156.7 231.2,155.0 229.2,154.2 227.3,153.1 225.6,151.7 223.8,150.6"/>
<polyline points="265.6,122.8 263.9,123.0 262.3,123.6 260.7,124.2 259.0,124.4 257.4,125.5 255.6,126.4 254.0,127.5 253.1,128.7 252.5,130.0 250.8,130.5 249.1,131.0 247.5,132.0 246.2,132.0"/>
<polyline points="294.4,117.5 292.9,116.7 291.2,116.2 290.5,114.2 290.7,112.0 290.0,110.0 288.8,108.9 288.0,107.5 286.9,106.2 285.0,106.7 283.0,106.9 281.8,108.0 281.2,109.5 280.0,110.6 278.4,111.3 276.7,111.7 275.0,111.9 273.4,112.8 271.5,112.8 270.0,113.8 269.8,111.9 269.4,110.0 268.2,110.5 266.9,110.6 266.4,112.5 265.2,114.2 265.0,116.2 265.4,117.8 266.1,119.4 266.2,121.0 265.6,122.8"/>
<polyline points="265.6,122.8 267.0,124.4 266.5,125.8 266.4,127.3 266.2,128.8 266.5,130.8 267.5,132.5 267.0,133.9 265.9,135.0 265.0,136.2 263.9,137.3 263.1,138.6 262.5,140.0 262.6,141.8 263.7,143.2 263.8,145.0 264.6,146.8 265.0,148.8 264.7,150.5 263.9,152.2 263.0,153.8 262.3,155.6 262.5,157.5"/>
<polyline points="243.0,171.5 244.5,170.9 246.2,170.6 247.5,169.6 249.1,168.8 251.0,168.5 252.5,167.5 254.1,166.6 255.7,165.6 257.5,165.0 258.9,164.4 260.2,163.7 261.2,162.5 261.3,160.7 262.2,159.2 262.5,157.5"/>
<polyline points="262.5,157.5 264.4,157.4 266.2,157.0 268.0,157.1 269.6,157.6 271.2,158.0 273.0,158.0"/>
<polyline points="288.0,142.5 286.3,143.6 284.4,144.4 282.5,145.0 281.0,146.4 279.1,147.4 277.5,148.8 276.1,150.3 275.0,152.0 274.2,153.9 273.0,155.6 273.4,156.8 273.0,158.0"/>
<polyline points="273.0,158.0 273.4,159.5 273.3,161.0 273.8,162.5 272.9,163.7 271.8,164.7 270.6,165.6 270.9,166.8 270.6,168.0 272.0,169.5 273.8,170.6 275.6,171.0 277.5,171.2 279.5,170.5"/>
<polyline points="279.5,170.5 280.6,169.6 282.0,169.4 283.1,170.1 283.8,171.2 285.6,171.5 287.5,172.0 289.4,171.3 291.2,170.6 292.6,169.8 293.8,168.8 294.9,168.0 296.2,168.0"/>
<polyline points="279.5,170.5 281.2,171.5 282.5,173.0 284.3,174.2 286.2,175.0 287.9,176.2 289.4,177.5 289.9,179.3 290.0,181.2 290.8,183.1 291.2,185.0 292.3,186.0 293.8,186.2 294.2,185.2 295.0,184.4 295.6,185.4 296.2,186.2 295.7,187.6 295.0,188.8 293.8,189.4 292.5,190.0 291.9,191.8 292.0,193.8 292.5,195.6 293.8,197.0 295.7,197.4 297.5,198.0 298.5,199.6 299.0,201.5"/>
<polyline points="279.5,170.5 278.0,172.0 278.5,173.3 279.4,174.4 278.9,175.8 278.0,177.0 276.4,177.1 275.0,176.2 274.0,177.7 273.8,179.4 272.6,181.0 271.2,182.5 270.6,183.7 270.6,185.0 271.6,186.2 272.5,187.5 273.7,188.1 275.0,188.0 275.0,189.6 275.0,191.2 274.3,193.0 273.0,194.4"/>
<polyline points="246.2,182.5 247.3,183.6 247.5,185.0 248.7,186.0 249.9,187.1 251.2,188.0 252.9,188.6 254.6,188.1 256.2,188.8 257.9,189.1 259.6,189.1 261.2,189.4 262.5,191.0 263.8,192.5 265.7,192.8 267.5,193.8 269.4,194.2 271.2,195.0 273.0,194.4"/>
<polyline points="273.0,194.4 273.8,196.2 274.6,197.5 275.1,199.0 276.2,200.0 276.8,201.6 276.8,203.3 277.0,205.0 277.2,206.9 278.0,208.8"/>
<polyline points="278.0,208.8 276.3,209.0 275.0,210.0 273.6,211.2 272.0,212.2 270.1,212.5 268.8,213.8 267.0,214.5 265.9,215.9 264.4,216.9"/>
<polyline points="264.4,216.9 263.2,216.2 262.5,215.0 262.2,213.4 261.2,212.0 259.6,212.3 258.0,212.5 256.7,211.7 255.2,211.6 253.8,211.2 252.2,210.4 250.3,210.3 248.8,209.4 247.2,208.7 245.3,208.7 243.8,208.0 242.1,208.9 240.3,209.5 238.8,210.6 237.3,211.2 236.4,212.4 235.0,213.0"/>
<polyline points="235.0,213.0 233.3,211.7 232.0,210.0 231.9,208.5 232.0,207.0 233.2,205.7 234.4,204.4 235.8,203.7 237.2,202.8 238.8,202.5 239.5,200.8 240.6,199.4 239.9,197.4 238.8,195.6"/>
<polyline points="264.4,216.9 264.5,218.5 265.3,220.0 265.6,221.3 265.0,222.5 264.2,223.7 263.5,225.0 262.5,226.7 261.9,228.5 262.6,230.2 262.5,232.0 262.7,234.1 263.5,236.0 264.0,237.6 263.7,239.3 264.0,241.0 263.9,242.5 263.7,244.1 263.8,245.6"/>
<polyline points="263.8,245.6 261.6,246.1 259.4,246.2 258.5,247.2 257.5,248.0 255.6,247.7 253.8,247.5 253.2,248.8 252.5,250.0"/>
<polyline points="252.5,250.0 250.6,249.6 248.8,249.4 248.5,247.9 248.2,246.5 248.0,245.0 247.7,243.0 248.3,241.0 247.7,239.7 247.0,238.6 245.5,238.5 244.0,238.3 242.9,239.4 241.5,240.2"/>
<polyline points="241.5,240.2 241.3,238.6 240.9,237.1 240.2,235.6 238.7,234.1 237.3,232.6 236.0,230.9 235.2,229.0 235.5,227.2 235.8,225.5 235.1,224.1 235.0,222.5"/>
<polyline points="235.0,222.5 234.9,221.0 235.3,219.5 235.6,218.0 235.0,216.4 235.1,214.7 235.0,213.0"/>
<polyline points="215.0,219.4 216.2,219.4 217.5,219.4 219.2,218.3 221.2,218.0 222.9,216.9 224.4,215.6 225.8,215.6 227.0,216.2 228.4,217.7 230.0,218.8 230.6,220.3 231.7,221.6 232.5,223.0 233.7,222.4 235.0,222.5"/>
<polyline points="207.5,226.2 207.5,228.0 205.6,228.7 203.8,229.4 203.0,231.0 202.0,232.5 202.1,234.5 203.0,236.2 204.8,236.8 206.2,238.0 205.3,239.9 205.0,242.0 205.9,243.8 207.5,245.0 207.0,246.8 207.0,248.8 206.2,250.8 206.0,253.0"/>
<polyline points="206.0,253.0 207.2,254.2 208.9,254.3 210.4,255.0 211.5,256.3 213.0,256.8 214.3,257.7 215.5,258.7 215.1,260.0 215.5,261.2 214.0,262.3 213.0,263.8"/>
<polyline points="206.0,253.0 207.2,251.9 208.8,251.2 210.7,251.2 212.5,250.6 214.5,250.4 216.2,249.4 217.9,248.1 220.0,247.5 221.2,246.2 222.5,245.0 224.3,246.2 226.2,247.0 228.1,246.3 230.0,246.2 231.4,245.7 232.4,244.4 233.8,243.8 235.7,243.4 237.5,242.5 238.7,241.5 240.2,241.0 241.5,240.2"/>
<polyline points="239.5,277.5 240.8,276.6 241.3,275.0 242.5,274.0 243.6,272.1 245.0,270.5 245.8,269.0 246.5,267.4 247.5,266.0 247.8,264.5 248.6,263.2 249.5,262.0 250.1,259.9 251.2,258.0 252.0,255.9 252.0,253.8 252.4,251.9 252.5,250.0"/>
<polyline points="263.8,245.6 265.5,246.9 267.5,247.5 267.2,249.5 266.2,251.2 267.4,252.3 268.8,253.0 270.6,252.4 272.5,252.5 273.7,252.8 275.0,253.0 276.6,252.2 278.0,251.2"/>
<polyline points="278.0,251.2 279.7,252.0 281.2,253.0 281.6,254.7 282.5,256.2 282.5,258.1 282.5,260.0"/>
<polyline points="292.5,222.5 290.6,223.4 288.8,224.4 287.3,225.0 286.5,226.4 285.0,227.0 284.2,228.3 284.1,229.8 283.8,231.2 283.0,232.6 281.9,233.6 281.2,235.0 280.8,236.7 279.6,238.2 279.4,240.0 278.7,241.6 278.3,243.4 277.5,245.0 276.9,246.6 276.7,248.3 276.2,250.0 278.0,251.2"/>
<polyline points="292.5,222.5 293.4,224.1 293.5,226.0 294.8,227.5 295.0,229.4 296.8,229.0 298.3,227.9 300.0,227.5 301.4,229.1 303.0,230.6"/>
<polyline points="290.0,213.8 290.2,215.8 291.2,217.5 291.6,219.2 291.9,220.9 292.5,222.5"/>
<polyline points="278.0,208.8 280.0,209.4 281.4,210.2 282.5,211.2 284.5,211.2 286.2,212.0 288.3,212.5 290.0,213.8"/>
<polyline points="290.0,213.8 291.3,212.3 293.0,211.2 294.1,209.4 295.0,207.5 296.2,206.2 297.5,205.0 298.3,203.3 299.0,201.5"/>
<polyline points="299.0,201.5 300.6,201.3 302.0,200.5 303.2,200.2 304.4,200.6"/>
<polyline points="304.4,200.6 306.3,201.3 308.0,202.5"/>
<polyline points="304.4,200.6 305.5,199.5 306.1,197.9 307.5,197.0 308.4,195.7 309.7,194.9 311.0,194.0"/>
<polyline points="323.8,99.4 322.8,101.4 321.2,103.0 319.6,103.8 318.0,104.6 316.2,105.0 314.7,105.7 313.1,106.4 311.7,107.5 310.0,108.0 308.4,108.7 306.9,109.6 305.5,110.7 303.8,111.2 302.0,111.8 300.6,113.0 299.8,111.4 299.1,109.8 298.8,108.0 298.1,109.2 296.9,110.0 296.6,111.7 296.1,113.3 296.2,115.0 295.1,116.1 294.4,117.5"/>
<polyline points="294.4,117.5 295.7,119.1 297.0,120.7 298.0,122.5 299.4,124.2 300.0,126.2"/>
<polyline points="323.8,99.4 325.4,100.5 327.2,101.5 329.0,102.5 330.8,103.2 331.5,104.6 331.8,106.1 332.5,107.5 333.2,109.4 333.8,111.2 334.0,113.1 334.8,114.7 335.6,116.2 336.1,118.2 336.2,120.3"/>
<polyline points="319.6,75.4 317.6,75.9 316.0,77.5 314.0,78.0 313.0,79.5 312.0,81.0 313.1,82.5 314.0,84.0 314.5,85.7 314.9,87.4 314.5,89.3 315.0,91.0 317.1,91.1 319.0,92.0 320.0,93.5 321.0,95.0 321.6,96.7 323.1,97.8 323.8,99.4"/>
<polyline points="319.6,75.4 321.2,75.7 322.5,76.6 324.0,77.0 324.7,78.3 325.2,79.7 326.0,81.0 327.9,81.9 330.1,82.1 332.0,83.0 334.1,83.5 336.1,84.2 338.0,85.0 339.7,84.9 341.3,86.0 343.0,86.0 344.2,87.5 345.5,88.8 347.0,90.0 348.8,91.2 350.0,93.0 351.9,93.8 354.0,94.0 354.8,95.5 356.0,96.6 357.0,98.0 358.7,97.5 360.3,96.6 362.0,96.0 363.4,95.3 365.0,95.0 366.8,96.2 368.0,98.0 369.1,98.3 370.0,99.0"/>
<polyline points="306.0,25.0 307.4,24.1 309.0,24.0 310.5,24.4 312.0,25.0 313.9,25.7 316.0,26.0 316.5,27.7 317.0,29.4 318.0,31.0 318.5,32.4 319.5,33.6 320.0,35.0 322.0,35.0 324.0,34.9 326.0,35.0 327.1,34.7 328.0,34.0 329.7,33.4 331.3,32.5 333.0,32.0 334.5,32.6 336.0,33.0 336.1,35.1 337.0,37.0 336.6,38.8 335.3,40.2 335.0,42.0 334.4,43.9 333.2,45.4 332.0,47.0 331.1,47.7 330.0,48.0 330.8,49.6 332.0,51.0 331.0,52.5 330.5,54.3 330.0,56.0 329.5,57.4 328.4,58.5 328.0,60.0 326.0,60.6 324.0,61.0 322.8,62.2 321.1,62.7 320.0,64.0 318.6,65.3 317.2,66.5 316.0,68.0 316.4,69.5 317.0,71.0 318.3,72.4 320.0,73.0 321.0,72.0 322.0,71.0 322.2,72.1 323.0,73.0 321.2,74.1 319.6,75.4"/>
<polyline points="205.6,148.0 207.5,149.4 210.6,152.0 211.2,156.2 212.0,161.2 215.0,163.8 218.0,165.0"/>
<polyline points="223.8,150.6 220.0,151.2 218.8,155.0 221.2,158.8 220.0,162.0 218.0,165.0"/>
<polyline points="324.0,40.5 326.0,40.5 326.8,42.5 325.5,44.0 323.8,43.0 324.0,40.5"/>
</g>
<polygon points="236.7,236.4 238.5,236.2 239.1,238.5 238.7,240.5 237.0,240.7 236.3,238.5" fill="#35c3f5" stroke="#fff" stroke-width="0.8"/>
<polygon points="276.5,122.5 278.5,120.5 280.0,119.3 281.5,120.8 283.3,121.5 283.8,124.0 282.5,126.2 283.0,128.5 280.5,129.5 277.5,130.0 274.6,129.2 274.8,126.5 276.2,125.0" fill="#88dcf9" stroke="#fff" stroke-width="0.8"/>
<polygon points="284.0,128.0 286.0,127.0 287.5,130.0 288.0,135.5 287.0,138.0 284.0,138.5 281.8,136.0 282.3,132.0 283.5,130.0" fill="#dcf4fe" stroke="#fff" stroke-width="0.8"/>
<circle cx="275.5" cy="282.4" r="0.7" fill="#6fd2f7"/>
<circle cx="275.5" cy="286.4" r="0.7" fill="#6fd2f7"/>
<circle cx="280.8" cy="284.8" r="0.7" fill="#6fd2f7"/>
</g>
<g><rect x="367.2" y="254.7" width="34" height="48.5" fill="#fff" stroke="#ececec" stroke-width="0.8"/>
<path d="M367.6,255.1 h28.5 l-3,2 l-5,1.5 l-6,1 l-4.5,-0.3 l-2.5,1.8 l-2,-0.5 l-1.5,-1.8 l-4,-0.7 z" fill="#d9d9d9"/>
<ellipse cx="376.3" cy="265.3" rx="2" ry="1.6" fill="#d6d6d6"/>
<circle cx="380.5" cy="270.5" r="0.45" fill="#dcdcdc"/>
<circle cx="381.5" cy="272.5" r="0.45" fill="#dcdcdc"/>
<circle cx="386.0" cy="273.0" r="0.45" fill="#dcdcdc"/>
<circle cx="393.5" cy="273.5" r="0.45" fill="#dcdcdc"/>
<circle cx="390.0" cy="259.5" r="0.45" fill="#dcdcdc"/>
<circle cx="386.0" cy="283.0" r="0.45" fill="#dcdcdc"/>
<circle cx="389.0" cy="284.5" r="0.45" fill="#dcdcdc"/>
<circle cx="393.0" cy="284.0" r="0.45" fill="#dcdcdc"/>
<circle cx="391.5" cy="286.5" r="0.45" fill="#dcdcdc"/>
<circle cx="382.5" cy="288.5" r="0.45" fill="#dcdcdc"/>
<circle cx="376.0" cy="291.0" r="0.45" fill="#dcdcdc"/>
<circle cx="380.0" cy="291.0" r="0.45" fill="#dcdcdc"/>
<circle cx="386.0" cy="291.0" r="0.45" fill="#dcdcdc"/>
<circle cx="382.0" cy="295.0" r="0.45" fill="#dcdcdc"/>
<circle cx="381.5" cy="299.0" r="0.45" fill="#dcdcdc"/>
<text x="391.5" y="295.2" font-size="4.4" fill="#8a8a8a" font-family="'Liberation Sans','Noto Sans CJK SC',sans-serif">南海</text>
<text x="391.5" y="301.3" font-size="4.4" fill="#8a8a8a" font-family="'Liberation Sans','Noto Sans CJK SC',sans-serif">诸岛</text></g>
</svg><!--MAPEND-->
<div id="fline" class="abs"></div>
<div id="foot" class="abs">湖南汇景规划建筑设计有限公司</div>
</body>
</html>
